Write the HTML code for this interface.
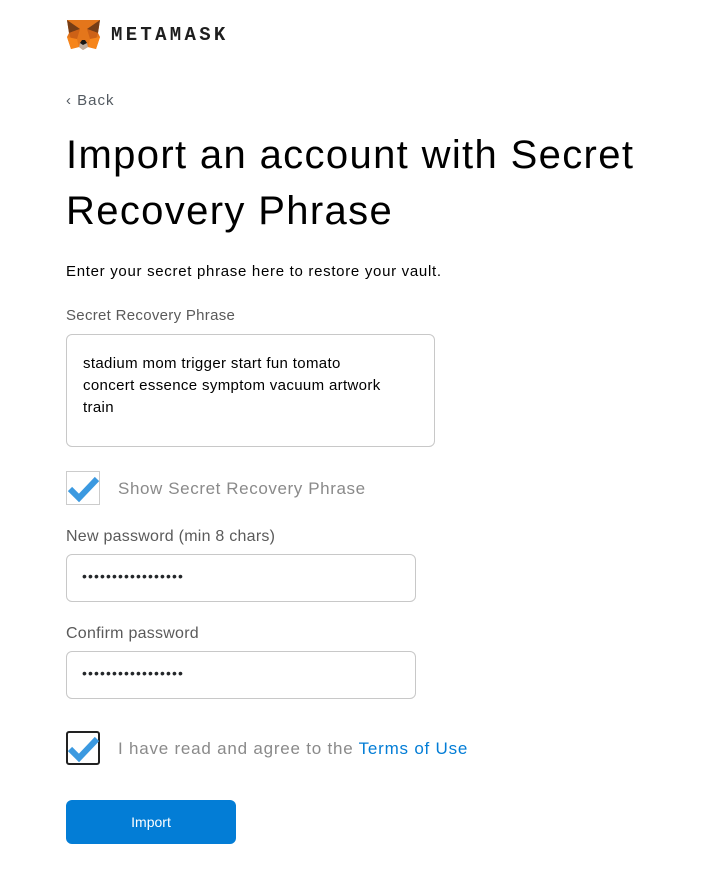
<!DOCTYPE html>
<html><head><style>
body{margin:0;background:#fff;font-family:"Liberation Sans",sans-serif;color:#24272a;}
.a{position:absolute;white-space:nowrap}
.box{position:absolute;border:1px solid #c8c8c8;border-radius:6px;box-sizing:border-box}
.cb{position:absolute;width:34px;height:34px;box-sizing:border-box}
</style></head><body>
<svg class="a" style="left:66px;top:19px" width="35" height="32" viewBox="0 0 35 32">
<polygon points="1,1 34,1 32,14 34,18 30,30 22,28 17,31 13,28 5,30 1,18 3,14" fill="#e4761b"/>
<polygon points="1,1 14,10 3,14" fill="#763d16"/>
<polygon points="34,1 21,10 32,14" fill="#763d16"/>
<polygon points="3,14 14,10 11,20 5,20" fill="#cd6116"/>
<polygon points="32,14 21,10 24,20 30,20" fill="#cd6116"/>
<polygon points="13,28 17,31 22,28 21,24 14,24" fill="#c0ad9e"/>
<polygon points="14,24 17,26 21,24 19,21 16,21" fill="#161616"/>
<polygon points="5,30 13,28 11,20 1,18" fill="#f6851b"/>
<polygon points="30,30 22,28 24,20 34,18" fill="#f6851b"/>
</svg>
<div class="a" style="left:111px;top:24px;font:bold 19px 'Liberation Mono',monospace;letter-spacing:3.3px;color:#1e1e1e">METAMASK</div>
<div class="a" style="left:66px;top:92px;font-size:15px;color:#535a61;letter-spacing:1px">‹ Back</div>
<div class="a" style="left:66px;top:127px;font-size:40px;line-height:56px;color:#000;letter-spacing:1.35px">Import an account with Secret<br>Recovery Phrase</div>
<div class="a" style="left:66px;top:263px;font-size:15px;color:#000;letter-spacing:0.7px">Enter your secret phrase here to restore your vault.</div>
<div class="a" style="left:66px;top:307px;font-size:15px;color:#5a5a5a;letter-spacing:0.3px">Secret Recovery Phrase</div>
<div class="box" style="left:66px;top:334px;width:369px;height:113px"></div>
<div class="a" style="left:83px;top:353px;font-size:15px;line-height:22px;color:#000;letter-spacing:0.35px">stadium mom trigger start fun tomato<br>concert essence symptom vacuum artwork<br>train</div>
<div class="cb" style="left:66px;top:471px;border:1px solid #ccc"></div>
<svg class="a" style="left:66px;top:471px" width="34" height="34"><path d="M4 18 L13 27 L31 8" stroke="#3b99e0" stroke-width="6" fill="none"/></svg>
<div class="a" style="left:118px;top:479px;font-size:17px;color:#8a8a8a;letter-spacing:0.6px">Show Secret Recovery Phrase</div>
<div class="a" style="left:66px;top:528px;font-size:16px;color:#5a5a5a;letter-spacing:0.25px">New password (min 8 chars)</div>
<div class="box" style="left:66px;top:554px;width:350px;height:48px"></div>
<div class="a" style="left:82px;top:568px;font-size:14px;letter-spacing:1.1px">•••••••••••••••••</div>
<div class="a" style="left:66px;top:625px;font-size:16px;color:#5a5a5a;letter-spacing:0.25px">Confirm password</div>
<div class="box" style="left:66px;top:651px;width:350px;height:48px"></div>
<div class="a" style="left:82px;top:665px;font-size:14px;letter-spacing:1.1px">•••••••••••••••••</div>
<div class="cb" style="left:66px;top:731px;border:2px solid #222;border-radius:3px"></div>
<svg class="a" style="left:66px;top:731px" width="34" height="34"><path d="M4 18 L13 27 L31 8" stroke="#3b99e0" stroke-width="6" fill="none"/></svg>
<div class="a" style="left:118px;top:739px;font-size:17px;color:#8a8a8a;letter-spacing:0.78px">I have read and agree to the <span style="color:#037dd6">Terms of Use</span></div>
<div class="a" style="left:66px;top:800px;width:170px;height:44px;background:#037dd6;border-radius:6px;color:#fff;font-size:14px;text-align:center;line-height:44px">Import</div>
</body></html>
